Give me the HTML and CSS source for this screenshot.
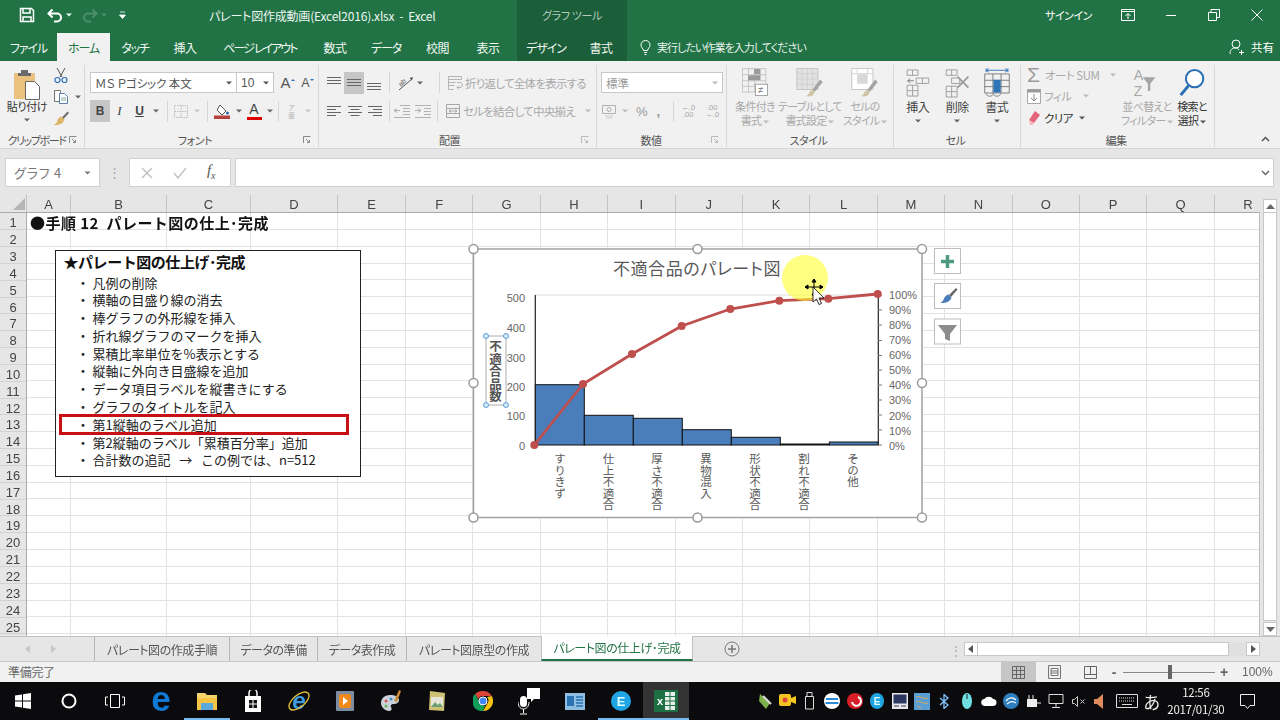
FILE: index.html
```html
<!DOCTYPE html>
<html lang="ja">
<head>
<meta charset="utf-8">
<title>パレート図作成動画(Excel2016).xlsx - Excel</title>
<link rel="stylesheet" href="styles.css">
</head>
<body>
<svg class="defs" width="0" height="0">
  <symbol id="caret" viewBox="0 0 6 4"><path d="M0 .5h6L3 3.5z" fill="currentColor"/></symbol>
  <symbol id="launch" viewBox="0 0 8 8"><path d="M.5 7V.5H7.5M3 3l3.500 3.500M6.500 4v2.500H4" fill="none" stroke="currentColor"/></symbol>
  <symbol id="al-top" viewBox="0 0 16 16"><path d="M1 2.500h14M1 5.500h14M1 8.500h14" stroke="currentColor" fill="none"/></symbol>
  <symbol id="al-mid" viewBox="0 0 16 16"><path d="M1 4.500h14M1 7.500h14M1 10.500h14" stroke="currentColor" fill="none"/></symbol>
  <symbol id="al-bot" viewBox="0 0 16 16"><path d="M1 8.500h14M1 11.500h14M1 14.500h14" stroke="currentColor" fill="none"/></symbol>
  <symbol id="al-l" viewBox="0 0 16 16"><path d="M1 3.500h14M1 6.500h9M1 9.500h14M1 12.500h9" stroke="currentColor" fill="none"/></symbol>
  <symbol id="al-c" viewBox="0 0 16 16"><path d="M1 3.500h14M3.500 6.500h9M1 9.500h14M3.500 12.500h9" stroke="currentColor" fill="none"/></symbol>
  <symbol id="al-r" viewBox="0 0 16 16"><path d="M1 3.500h14M6 6.500h9M1 9.500h14M6 12.500h9" stroke="currentColor" fill="none"/></symbol>
  <symbol id="brush" viewBox="0 0 16 16"><path d="M8.500 7.500L14 1.500l1.500 1.500-5.500 6z" fill="#6e6e6e"/><path d="M8 6.500l3 3-2 3.500c-2 1.500-6 2.500-9 2 3-1 3.500-3 4-5 1-2 3-3.500 4-3.500z" fill="#dcb76a"/></symbol>
</svg>

<header class="titlebar">
  <div class="qat">
    <svg class="qi-save" width="16" height="16" viewBox="0 0 16 16"><path d="M1.500 1.500h11l2 2v11h-13z" fill="none" stroke="#fff" stroke-width="1.500"/><path d="M4 2v4h7V2M4 15v-5h8v5" fill="none" stroke="#fff" stroke-width="1.500"/></svg>
    <svg class="qi-undo" width="16" height="16" viewBox="0 0 16 16"><path d="M2 6.500h8a4 4 0 0 1 0 8H7M5.500 2.500L1.500 6.500l4 4" fill="none" stroke="#fff" stroke-width="2"/></svg>
    <svg class="qi-c" width="6" height="4"><use href="#caret"/></svg>
    <svg class="qi-redo" width="16" height="16" viewBox="0 0 16 16"><path d="M14 6.500H6a4 4 0 0 0 0 8h3M10.500 2.500l4 4-4 4" fill="none" stroke="#4d8f6b" stroke-width="2"/></svg>
    <svg class="qi-c dim" width="6" height="4"><use href="#caret"/></svg>
    <svg class="qi-more" width="7" height="8" viewBox="0 0 7 8"><path d="M1 1h5M.5 4h6L3.500 7.500z" stroke="#fff" fill="#fff" stroke-width=".8"/></svg>
  </div>
  <div class="doc-title">パレート図作成動画(Excel2016).xlsx&nbsp; -&nbsp; Excel</div>
  <div class="tool-title">グラフ ツール</div>
  <div class="signin">サインイン</div>
  <div class="winbtns">
    <svg width="14" height="14" viewBox="0 0 14 14"><path d="M.5 1.500h13v11H.5zM.5 3.500h13M7 11V5.500M4.500 8L7 5.500 9.500 8" fill="none" stroke="#fff"/></svg>
    <svg width="12" height="12" viewBox="0 0 12 12"><path d="M1 6.500h10" stroke="#fff"/></svg>
    <svg width="12" height="12" viewBox="0 0 12 12"><path d="M.5 3.500h8v8h-8zM3 3.500V.5h8.500v8H8.500" fill="none" stroke="#fff"/></svg>
    <svg width="12" height="12" viewBox="0 0 12 12"><path d="M.5.500l11 11M11.500.5l-11 11" stroke="#fff"/></svg>
  </div>
</header>

<nav class="tabsbar">
  <div class="tab kana t-file">ファイル</div>
  <div class="tab kana t-home active">ホーム</div>
  <div class="tab kana t-touch">タッチ</div>
  <div class="tab t-ins">挿入</div>
  <div class="tab t-page">ページ レイアウト</div>
  <div class="tab t-num">数式</div>
  <div class="tab kana t-data">データ</div>
  <div class="tab t-rev">校閲</div>
  <div class="tab t-view">表示</div>
  <div class="tab kana tool t-des">デザイン</div>
  <div class="tab tool t-fmt">書式</div>
  <div class="tell">
    <svg width="11" height="15" viewBox="0 0 11 15"><path d="M3.500 10.500C3 8 1 7.500 1 5a4.500 4.500 0 0 1 9 0c0 2.500-2 3-2.500 5.500zM4 12.500h3M4.500 14.500h2" fill="none" stroke="#fff"/></svg>
    <span>実行したい作業を入力してください</span>
  </div>
  <div class="share">
    <svg width="16" height="16" viewBox="0 0 16 16"><circle cx="7" cy="5" r="4" fill="none" stroke="#fff"/><path d="M1 15c0-4 2-6 5-6 2 0 3 .5 4 2M10 13.500h5M12.500 11v5" fill="none" stroke="#fff"/></svg>
    <span>共有</span>
  </div>
</nav>

<section class="ribbon">
  <div class="group g-clip">
    <div class="gbody clip-body">
      <div class="paste">
        <svg width="28" height="31" viewBox="0 0 28 31"><rect x="1" y="4" width="21" height="26" rx="1" fill="#eac17f"/><path d="M8 1h7v3h3v3H5V4h3z" fill="#6a6a6a"/><path d="M12.500 12.500h9l5 5v13h-14z" fill="#fff" stroke="#666"/></svg>
        <span class="lbl dark">貼り付け</span>
        <svg class="car" width="6" height="4"><use href="#caret"/></svg>
      </div>
      <div class="clip-small">
        <svg width="16" height="16" viewBox="0 0 16 16"><path d="M4 1l5 9M12 1L7 10" stroke="#555" fill="none"/><circle cx="4.500" cy="13" r="2.500" fill="none" stroke="#2b6fb5" stroke-width="1.200"/><circle cx="11.500" cy="13" r="2.500" fill="none" stroke="#2b6fb5" stroke-width="1.200"/></svg>
        <div class="inl"><svg width="16" height="15" viewBox="0 0 16 15"><path d="M1.500 1.500h6v11h-6z" fill="#fff" stroke="#777"/><path d="M6.500 4.500h5l3 3v7h-8z" fill="#fff" stroke="#5a7fa8"/><path d="M8 9h5M8 11h5" stroke="#8aa"/></svg><svg class="car2" width="6" height="4"><use href="#caret"/></svg></div>
        <svg width="17" height="16" viewBox="0 0 16 16"><use href="#brush"/></svg>
      </div>
    </div>
    <div class="glabel"><i></i><span>クリップボード</span><svg width="8" height="8"><use href="#launch"/></svg></div>
  </div>

  <div class="group g-font">
    <div class="gbody font-body">
      <div class="row">
        <div class="combo c-font"><span>ＭＳ Ｐゴシック 本文</span><svg width="6" height="4"><use href="#caret"/></svg></div>
        <div class="combo c-size"><span>10</span><svg width="6" height="4"><use href="#caret"/></svg></div>
        <div class="w20 aa bigA">A<sup class="up"></sup></div>
        <div class="w20 aa smallA">A<sup class="dn"></sup></div>
      </div>
      <div class="row row2">
        <div class="fbtn w20 on b">B</div>
        <div class="fbtn w19 it">I</div>
        <div class="fbtn w21 un">U</div>
        <div class="cw w12"><svg width="6" height="4"><use href="#caret"/></svg></div>
        <div class="vs m5"></div>
        <div class="fbtn w25"><svg width="16" height="15" viewBox="0 0 16 15"><path d="M1.500 1.500h13v12h-13zM8 1.500v12M1.500 7.500h13" fill="none" stroke="#bdbdbd" stroke-dasharray="1.500 1"/></svg></div>
        <div class="cw w8 dim"><svg width="6" height="4"><use href="#caret"/></svg></div>
        <div class="vs m6"></div>
        <div class="fbtn w26 col"><svg width="16" height="15" viewBox="0 0 16 15"><path d="M6 1l6 6-4 4-5-5z" fill="#fff" stroke="#555"/><circle cx="13.500" cy="9" r="1.500" fill="#2b6fb5"/><rect y="11.500" width="16" height="3.500" fill="#b5413f"/></svg></div>
        <div class="cw w7"><svg width="6" height="4"><use href="#caret"/></svg></div>
        <div class="fbtn w24 col"><span class="fa">A</span><b class="redbar"></b></div>
        <div class="cw w7"><svg width="6" height="4"><use href="#caret"/></svg></div>
        <div class="vs m5"></div>
        <div class="fbtn w25 ruby">ア<br>亜</div>
        <div class="cw w8 dim"><svg width="6" height="4"><use href="#caret"/></svg></div>
      </div>
    </div>
    <div class="glabel"><i></i><span>フォント</span><svg width="8" height="8"><use href="#launch"/></svg></div>
  </div>

  <div class="group g-align">
    <div class="gbody align-body">
      <div class="row">
        <svg class="al" width="16" height="16"><use href="#al-top"/></svg>
        <div class="al-on"><svg width="16" height="16"><use href="#al-mid"/></svg></div>
        <svg class="al" width="16" height="16"><use href="#al-bot"/></svg>
        <div class="vs v-a"></div>
        <div class="orient">
          <svg width="18" height="18" viewBox="0 0 18 18"><text x="2" y="10" class="ab" transform="rotate(-45 7 8)">ab</text><path d="M3 16L16 5" stroke="#555" fill="none"/><path d="M17 3l-3.500 1 2.500 2.500z" fill="#555"/></svg>
          <svg width="6" height="4"><use href="#caret"/></svg>
        </div>
        <div class="vs v-b"></div>
        <div class="cmd cmd-wrap dis">
          <svg width="16" height="16" viewBox="0 0 16 16"><path d="M1.500 1.500h13v3h-13zM1.500 7.500h7M1.500 10.500h6M1.500 14.500h5M1.500 1.500v13M10 7.500h3a2 2 0 0 1 0 5h-3l2-2m-2 2l2 2" fill="none" stroke="#b4b4b4"/></svg>
          <span>折り返して全体を表示する</span>
        </div>
      </div>
      <div class="row row2">
        <svg class="al2" width="16" height="16"><use href="#al-l"/></svg>
        <svg class="al2" width="16" height="16"><use href="#al-c"/></svg>
        <svg class="al2 last" width="16" height="16"><use href="#al-r"/></svg>
        <div class="vs v-c"></div>
        <svg class="ind" width="18" height="14" viewBox="0 0 18 14"><path d="M7 1.500h10M10 4.500h7M10 7.500h7M10 10.500h7M1 13.500h16M1 6.500h6M1 6.500l3-2M1 6.500l3 2" fill="none" stroke="#b2b2b2"/></svg>
        <svg class="ind" width="18" height="14" viewBox="0 0 18 14"><path d="M1 1.500h16M1 13.500h16M10 4.500h7M10 7.500h7M10 10.500h7M1 6.500h6M7 6.500l-3-2M7 6.500l-3 2" fill="none" stroke="#b2b2b2"/></svg>
        <div class="vs v-d"></div>
        <div class="cmd cmd-merge dis">
          <svg width="16" height="16" viewBox="0 0 16 16"><path d="M1.500 1.500h13v13h-13zM1.500 5.500h13M1.500 10.500h13M4 8h8M4 8l2-1.500M4 8l2 1.500M12 8l-2-1.500M12 8l-2 1.500" fill="none" stroke="#a8a8a8"/></svg>
          <span>セルを結合して中央揃え</span>
          <svg class="car3" width="6" height="4"><use href="#caret"/></svg>
        </div>
      </div>
    </div>
    <div class="glabel"><i></i><span>配置</span><svg class="dim" width="8" height="8"><use href="#launch"/></svg></div>
  </div>

  <div class="group g-num">
    <div class="gbody num-body">
      <div class="row">
        <div class="combo c-num"><span>標準</span><svg class="dim" width="6" height="4"><use href="#caret"/></svg></div>
      </div>
      <div class="row row2 numrow">
        <svg width="17" height="15" viewBox="0 0 17 15"><path d="M1.500 1.500h13v8h-13z" fill="none" stroke="#b0b0b0"/><circle cx="8" cy="5.500" r="2" fill="none" stroke="#b0b0b0"/><path d="M4 12h8M5 14h6" stroke="#ccc"/></svg>
        <svg class="dim ncar" width="6" height="4"><use href="#caret"/></svg>
        <span class="pct">%</span>
        <span class="comma">,</span>
        <div class="vs m4"></div>
        <span class="dec">←.0<br>.00</span>
        <span class="dec">.00<br>→.0</span>
      </div>
    </div>
    <div class="glabel"><i></i><span>数値</span><svg class="dim" width="8" height="8"><use href="#launch"/></svg></div>
  </div>

  <div class="group g-styles">
    <div class="gbody styles-body">
      <div class="big dis s-c">
        <svg class="st" width="26" height="29" viewBox="0 0 30 33"><path d="M.5.500h27v27H.5zM.5 7.500h27M.5 14.500h27M.5 21h14M7.500.5v27M14.500.5v27M21 .5v14" fill="none" stroke="#c0c0c0"/><path d="M14 1h7v6h-7zM7 8h7v6H7zM14 8h7v6h-7z" fill="#9a9a9a"/><rect x="15.500" y="18.500" width="14" height="13" fill="#fff" stroke="#9a9a9a"/><text x="18.500" y="29" class="ne">≠</text></svg>
        <span>条件付き<br>書式 <svg width="6" height="4"><use href="#caret"/></svg></span>
      </div>
      <div class="big dis s-t">
        <svg class="st" width="28" height="29" viewBox="0 0 31 33"><path d="M.5.500h24v24H.5z" fill="#e2e2e2" stroke="#c0c0c0"/><path d="M.5 6.500h24M.5 12.500h24M.5 18.500h24M6.500.5v24M12.500.5v24M18.500.5v24" stroke="#cfcfcf"/><path d="M27 13L18 25l3 2 9-11z" fill="#a4a4a4"/><path d="M18 25l3 2-2 4c-2 1-5 2-8 1 2-1 3-2 4-5z" fill="#cfc5a5"/></svg>
        <span>テーブルとして<br>書式設定 <svg width="6" height="4"><use href="#caret"/></svg></span>
      </div>
      <div class="big dis s-s">
        <svg class="st" width="28" height="29" viewBox="0 0 31 33"><path d="M.5.500h24v24H.5z" fill="#fff" stroke="#c0c0c0"/><path d="M.5 6.500h24M6.500.5v6M18.500.5v6" stroke="#cfcfcf"/><rect x="6.500" y="7" width="12" height="11" fill="#d8d8d8"/><path d="M27 13L18 25l3 2 9-11z" fill="#a4a4a4"/><path d="M18 25l3 2-2 4c-2 1-5 2-8 1 2-1 3-2 4-5z" fill="#cfc5a5"/></svg>
        <span>セルの<br>スタイル <svg width="6" height="4"><use href="#caret"/></svg></span>
      </div>
    </div>
    <div class="glabel"><i></i><span>スタイル</span><i></i></div>
  </div>

  <div class="group g-cells">
    <div class="gbody cells-body">
      <div class="big cell">
        <svg class="ce" width="27" height="29" viewBox="0 0 30 32"><path d="M3.500 1.500h12v6h-12zM9.500 1.500v6M3.500 18.500h12v12h-12zM3.500 24.500h12M9.500 18.500v12M13.500 10.500h14v6h-14zM20.500 10.500v6" fill="none" stroke="#9b9b9b"/><path d="M4 13.500h7M4 13.500l3-2.500M4 13.500l3 2.500" fill="none" stroke="#777"/></svg>
        <span>挿入</span><svg class="car" width="6" height="4"><use href="#caret"/></svg>
      </div>
      <div class="big cell">
        <svg class="ce" width="29" height="29" viewBox="0 0 32 32"><path d="M3.500 1.500h12v6h-12zM9.500 1.500v6M3.500 19.500h12v12h-12zM3.500 25.500h12M9.500 19.500v12M9.500 10.500h9v6h-9z" fill="none" stroke="#9b9b9b"/><path d="M16 9l12 12M28 9L16 21" stroke="#9c9c9c" stroke-width="2"/></svg>
        <span>削除</span><svg class="car" width="6" height="4"><use href="#caret"/></svg>
      </div>
      <div class="big cell">
        <svg class="ce" width="26" height="31" viewBox="0 0 28 33"><path d="M2 2.500h24M2 .5v4M26 .5v4M2 2.500l3-2M2 2.500l3 2M26 2.500l-3-2M26 2.500l-3 2" fill="none" stroke="#2b6fb5"/><path d="M.5 6.500h27v21H.5zM.5 13.500h27M.5 20.500h27M9.500 6.500v21M18.500 6.500v21" fill="none" stroke="#777"/><rect x="10" y="13" width="8" height="8" fill="#2e75b6"/><rect x="10" y="20" width="8" height="7" fill="#2e75b6"/><path d="M2 28c0 4 8 4 8 0M10 28c0 4 8 4 8 0" fill="none" stroke="#777"/></svg>
        <span>書式</span><svg class="car" width="6" height="4"><use href="#caret"/></svg>
      </div>
    </div>
    <div class="glabel"><i></i><span>セル</span><i></i></div>
  </div>

  <div class="group g-edit">
    <div class="gbody edit-body">
      <div class="edit-list">
        <div class="e-row dis"><span class="sigma">Σ</span><span>オート SUM</span><svg class="car4" width="6" height="4"><use href="#caret"/></svg></div>
        <div class="e-row dis"><svg width="14" height="15" viewBox="0 0 14 15"><path d="M.5.500h13v14H.5z" fill="#fff" stroke="#a8a8a8"/><path d="M.5.500h13v3H.5z" fill="#9a9a9a"/><path d="M7 5v7M4 9l3 3 3-3" fill="none" stroke="#888"/></svg><span>フィル</span><svg class="car4" width="6" height="4"><use href="#caret"/></svg></div>
        <div class="e-row clr"><svg width="14" height="15" viewBox="0 0 14 15"><path d="M8 1l5 4-6 8-5-3z" fill="#e4647c"/><path d="M2 10l5 3-1.500 2H3z" fill="#f3b5c0"/></svg><span>クリア</span><svg class="car4" width="6" height="4"><use href="#caret"/></svg></div>
      </div>
      <div class="big dis s-sort">
        <svg width="30" height="30" viewBox="0 0 36 36"><text x="2" y="14" class="az">A</text><text x="2" y="33" class="az">Z</text><path d="M13 11h15l-6 8v8l-3 1v-9z" fill="#a5a5a5"/></svg>
        <span>並べ替えと<br>フィルター <svg width="6" height="4"><use href="#caret"/></svg></span>
      </div>
      <div class="big s-find">
        <svg width="26" height="30" viewBox="0 0 30 34"><circle cx="18" cy="12" r="10" fill="#fff" stroke="#2b6fb5" stroke-width="2.400"/><path d="M11 20L2 31" stroke="#2b6fb5" stroke-width="3.500"/></svg>
        <span>検索と<br>選択 <svg width="6" height="4"><use href="#caret"/></svg></span>
      </div>
    </div>
    <div class="glabel"><i></i><span>編集</span><i></i></div>
  </div>
  <div class="collapse"><svg width="9" height="6" viewBox="0 0 9 6"><path d="M1 5l3.500-3.500L8 5" fill="none" stroke="#555" stroke-width="1.500"/></svg></div>
</section>

<section class="formula">
  <div class="namebox"><span>グラフ 4</span><svg width="7" height="4"><use href="#caret"/></svg></div>
  <div class="fdots">⋮</div>
  <div class="fxbox">
    <svg width="12" height="12" viewBox="0 0 12 12"><path d="M1 1l10 10M11 1L1 11" stroke="#c3c3c3" stroke-width="1.500"/></svg>
    <svg width="14" height="12" viewBox="0 0 14 12"><path d="M1 6l4 5 8-10" fill="none" stroke="#c3c3c3" stroke-width="1.500"/></svg>
    <span class="fx">f<sub>x</sub></span>
  </div>
  <div class="fbox"><svg width="9" height="6" viewBox="0 0 9 6"><path d="M1 1l3.500 3.500L8 1" fill="none" stroke="#666" stroke-width="1.500"/></svg></div>
</section>

<main class="sheet">
  <div class="sheet-left">
    <div class="colhead">
      <div class="corner"><svg width="12" height="12" viewBox="0 0 12 12"><path d="M12 0v12H0z" fill="#b5b5b5"/></svg></div>
      <div class="cols">
        <div>A</div><div>B</div><div>C</div><div>D</div><div>E</div><div>F</div><div>G</div><div>H</div><div>I</div>
        <div>J</div><div>K</div><div>L</div><div>M</div><div>N</div><div>O</div><div>P</div><div>Q</div><div>R</div>
      </div>
    </div>
    <div class="gridwrap">
      <div class="rownums">
        <div>1</div><div>2</div><div>3</div><div>4</div><div>5</div><div>6</div><div>7</div><div>8</div><div>9</div><div>10</div>
        <div>11</div><div>12</div><div>13</div><div>14</div><div>15</div><div>16</div><div>17</div><div>18</div><div>19</div><div>20</div>
        <div>21</div><div>22</div><div>23</div><div>24</div><div>25</div>
      </div>
      <div class="cells">
        <i></i><i></i><i></i><i></i><i></i><i></i><i></i><i></i><i></i><i></i><i></i><i></i><i></i><i></i><i></i><i></i><i></i><i></i>
      </div>
    </div>
  </div>
  <div class="vscroll">
    <div class="vbtn"><svg width="9" height="5"><path d="M0 5h9L4.500 0z" fill="#666"/></svg></div>
    <div class="vthumb"></div>
    <div class="vbtn"><svg width="9" height="5"><path d="M0 0h9L4.500 5z" fill="#666"/></svg></div>
  </div>

  <h1 class="a1">●手順 12&nbsp; パレート図の仕上･完成</h1>

  <div class="textbox">
    <h2>★パレート図の仕上げ･完成</h2>
    <ul>
      <li>凡例の削除</li>
      <li>横軸の目盛り線の消去</li>
      <li>棒グラフの外形線を挿入</li>
      <li>折れ線グラフのマークを挿入</li>
      <li>累積比率単位を%表示とする</li>
      <li>縦軸に外向き目盛線を追加</li>
      <li>データ項目ラベルを縦書きにする</li>
      <li>グラフのタイトルを記入</li>
      <li class="mark">第1縦軸のラベル追加</li>
      <li>第2縦軸のラベル「累積百分率」追加</li>
      <li>合計数の追記&nbsp;&nbsp; →&nbsp;&nbsp; この例では、n=512</li>
    </ul>
  </div>

  <svg class="chart" width="530" height="300" viewBox="460 235 530 300">
    <rect x="473.500" y="249" width="448.500" height="268.500" fill="#fff" stroke="#a3a3a3" stroke-width="1.500"/>
    <text x="697" y="275" class="c-title">不適合品のパレート図</text>
    <path d="M535 295h343" stroke="#dcdcdc"/>
    <g class="bars">
      <rect x="535.300" y="384.700" width="49" height="60.300"/>
      <rect x="584.300" y="415.300" width="49" height="29.700"/>
      <rect x="633.300" y="418.300" width="49" height="26.700"/>
      <rect x="682.300" y="429.700" width="49" height="15.300"/>
      <rect x="731.300" y="437.300" width="49" height="7.700"/>
      <rect x="780.300" y="444" width="49" height="1"/>
      <rect x="829.300" y="442" width="49" height="3"/>
    </g>
    <path d="M535.300 295v150M878.300 295v150" stroke="#222" stroke-width="1.200"/>
    <path d="M878 295h4M878 310h4M878 325h4M878 340.500h4M878 355.500h4M878 370h4M878 385h4M878 400h4M878 415h4M878 430h4M878 445h4" stroke="#777"/>
    <g class="ax-l">
      <text x="525" y="302">500</text><text x="525" y="332">400</text><text x="525" y="361.500">300</text>
      <text x="525" y="390.500">200</text><text x="525" y="420">100</text><text x="525" y="449.500">0</text>
    </g>
    <g class="ax-r">
      <text x="889" y="298.500">100%</text><text x="889" y="313.500">90%</text><text x="889" y="328.500">80%</text>
      <text x="889" y="344">70%</text><text x="889" y="359">60%</text><text x="889" y="374">50%</text>
      <text x="889" y="389">40%</text><text x="889" y="404">30%</text><text x="889" y="419.500">20%</text>
      <text x="889" y="434.500">10%</text><text x="889" y="449.500">0%</text>
    </g>
    <g class="cats">
      <text x="560" y="453">すりきず</text><text x="608.500" y="453">仕上不適合</text><text x="657" y="453">厚さ不適合</text>
      <text x="706" y="453">異物混入</text><text x="755" y="453">形状不適合</text><text x="804" y="453">割れ不適合</text><text x="853" y="453">その他</text>
    </g>
    <path d="M534.300 445L583 384L632 354L681.700 326L730.300 309L779.300 300.700L828.300 298.700L877.700 294" fill="none" stroke="#be4f4c" stroke-width="2.800"/>
    <g fill="#be4f4c">
      <circle cx="534.300" cy="445" r="4"/><circle cx="583" cy="384" r="4"/><circle cx="632" cy="354" r="4"/><circle cx="681.700" cy="326" r="4"/>
      <circle cx="730.300" cy="309" r="4"/><circle cx="779.300" cy="300.700" r="4"/><circle cx="828.300" cy="298.700" r="4"/><circle cx="877.700" cy="294" r="4"/>
    </g>
    <rect x="486" y="336" width="20" height="69" fill="#fff" stroke="#9a9a9a" stroke-width=".8"/>
    <text x="495.500" y="340" class="ax-title">不適合品数</text>
    <g class="h-small">
      <circle cx="486" cy="336" r="2.500"/><circle cx="506" cy="336" r="2.500"/><circle cx="486" cy="405" r="2.500"/><circle cx="506" cy="405" r="2.500"/>
    </g>
    <g class="h-big">
      <circle cx="473.500" cy="249" r="4.500"/><circle cx="697.500" cy="249" r="4.500"/><circle cx="922" cy="249" r="4.500"/>
      <circle cx="473.500" cy="383" r="4.500"/><circle cx="922" cy="383" r="4.500"/>
      <circle cx="473.500" cy="517.500" r="4.500"/><circle cx="697.500" cy="517.500" r="4.500"/><circle cx="922" cy="517.500" r="4.500"/>
    </g>
    <circle cx="805" cy="278" r="23" fill="#ffff33" opacity=".62"/>
    <path d="M814 279v18M805 287h18M814 279l-2 3h4zM814 297l-2-3h4zM805 287l3-2v4zM823 287l-3-2v4z" fill="#000" stroke="#000" stroke-width="1"/>
    <path d="M813 287v15l3.500-3 2.500 5.500 2.500-1-2.500-5.500h5z" fill="#fff" stroke="#000" stroke-width=".8"/>
    <g class="fb">
      <rect x="934.500" y="248.500" width="26" height="25"/><rect x="934.500" y="283.500" width="26" height="25"/><rect x="934.500" y="319" width="26" height="25"/>
    </g>
    <path d="M947.500 255v13M941 261.500h13" stroke="#4f9a80" stroke-width="3.500"/>
    <path d="M949 295l7-7 1.500 1.500-6.500 7.500z" fill="#666"/><path d="M948.500 294.500l3 3c-1 4-6 6-11.500 5.500 3.500-1.500 3-3 4.500-5.500 1-1.500 2.500-3 4-3z" fill="#4a7ebb"/>
    <path d="M938 325h19l-7 9v7l-5-2v-5z" fill="#8c8c8c"/>
  </svg>
</main>

<section class="sheettabs">
  <div class="nav-arrows"><svg width="5" height="8"><path d="M5 0v8L0 4z" fill="#c8c8c8"/></svg><svg width="5" height="8"><path d="M0 0v8l5-4z" fill="#c8c8c8"/></svg></div>
  <div class="stab s1">パレート図の作成手順</div>
  <div class="stab s2">データの準備</div>
  <div class="stab s3">データ表作成</div>
  <div class="stab s4">パレート図原型の作成</div>
  <div class="stab s5">パレート図の仕上げ･完成</div>
  <div class="addsheet"><svg width="16" height="16" viewBox="0 0 16 16"><circle cx="8" cy="8" r="7" fill="none" stroke="#777"/><path d="M8 4v8M4 8h8" stroke="#777" stroke-width="1.500"/></svg></div>
  <div class="splitdots">⋮</div>
  <div class="hscroll">
    <div class="hbtn"><svg width="5" height="8"><path d="M5 0v8L0 4z" fill="#555"/></svg></div>
    <div class="hthumb"></div>
    <div class="htrack"></div>
    <div class="hbtn"><svg width="5" height="8"><path d="M0 0v8l5-4z" fill="#555"/></svg></div>
  </div>
</section>

<footer class="status">
  <span class="ready">準備完了</span>
  <div class="views">
    <div class="view on"><svg width="13" height="13" viewBox="0 0 13 13"><path d="M.5.500h12v12H.5zM.5 4.500h12M.5 8.500h12M4.500.5v12M8.500.5v12" fill="none" stroke="#666"/></svg></div>
    <div class="view"><svg width="13" height="14" viewBox="0 0 13 14"><path d="M.5.500h12v13H.5zM3 3.500h7v7H3zM3 6h7M3 8h7" fill="none" stroke="#777"/></svg></div>
    <div class="view"><svg width="13" height="13" viewBox="0 0 13 13"><path d="M.5.500h12v12H.5zM.5 8.500h12M6.500.5v8" fill="none" stroke="#666"/></svg></div>
  </div>
  <div class="zoombar">
    <span class="zbtn">-</span>
    <div class="slider"><b></b></div>
    <span class="zbtn">+</span>
  </div>
  <span class="pctzoom">100%</span>
</footer>

<footer class="taskbar">
  <div class="tb">
    <svg width="16" height="16" viewBox="0 0 16 16"><path d="M0 2.500l7-1v6H0zM8 1.300L16 0v7.500H8zM0 8.500h7v6l-7-1zM8 8.500h8V16l-8-1.300z" fill="#fff"/></svg>
  </div>
  <div class="tb"><svg width="16" height="16" viewBox="0 0 16 16"><circle cx="8" cy="8" r="6.500" fill="none" stroke="#fff" stroke-width="2"/></svg></div>
  <div class="tb"><svg width="20" height="16" viewBox="0 0 20 16"><path d="M5.500 1.500h9v13h-9zM3 4H.5v8H3M17 4h2.500v8H17" fill="none" stroke="#fff"/></svg></div>
  <div class="tb"><span class="edge">e</span></div>
  <div class="tb run"><svg width="20" height="18" viewBox="0 0 20 18"><path d="M0 1h8l2 2h10v4H0z" fill="#f5d26a"/><rect y="6" width="20" height="12" fill="#f5c445"/><rect x="4" y="11" width="12" height="7" fill="#5aa9dd"/></svg></div>
  <div class="tb"><svg width="18" height="22" viewBox="0 0 18 22"><path d="M1 6h16v16H1z" fill="#fff"/><path d="M5 6V3a4 4 0 0 1 8 0v3" fill="none" stroke="#fff" stroke-width="1.500"/><path d="M5 10h3.500v3.500H5zM9.500 10H13v3.500H9.500zM5 14.500h3.500V18H5zM9.500 14.500H13V18H9.500z" fill="#111"/></svg></div>
  <div class="tb"><div class="ie-wrap"><span class="ie">e</span><svg width="24" height="24" viewBox="0 0 24 24"><ellipse cx="12" cy="12" rx="12" ry="6" transform="rotate(-40 12 12)" fill="none" stroke="#e8c33c" stroke-width="1.300"/></svg></div></div>
  <div class="tb"><svg width="18" height="20" viewBox="0 0 18 20"><rect width="18" height="20" rx="1" fill="#7d8ba3"/><rect x="3" y="3" width="12" height="14" rx="2" fill="#f08a1d"/><path d="M7 6l5 4-5 4z" fill="#fff"/></svg></div>
  <div class="tb"><svg width="22" height="24" viewBox="0 0 22 24"><path d="M10 6C4 6 1 10 1 14s4 8 8 8c3 0 3-2 2-4s1-3 3-3 5-1 5-4-4-5-9-5z" fill="#c9d2da"/><circle cx="6" cy="12" r="1.500" fill="#d9534f"/><circle cx="6" cy="17" r="1.500" fill="#5cb85c"/><circle cx="11" cy="10" r="1.500" fill="#428bca"/><path d="M14 12L19 1l2 1-4 11z" fill="#c98b3c"/></svg></div>
  <div class="tb"><svg width="20" height="22" viewBox="0 0 20 22"><path d="M3 1l15 2-1 18-15-1z" fill="#cfc275"/><rect x="4" y="7" width="12" height="10" fill="#e6e6d8"/><path d="M4 17l4-5 3 3 2-2 3 4z" fill="#6b9f71"/></svg></div>
  <div class="tb"><svg width="20" height="20" viewBox="0 0 20 20"><path d="M10 0a10 10 0 0 1 8.700 5H10a5 5 0 0 0-4.700 3.300L2 3a10 10 0 0 1 8-3z" fill="#db4437"/><path d="M18.700 5A10 10 0 0 1 10 20l4.300-7.500A5 5 0 0 0 14 6z" fill="#f4c20d"/><path d="M2 3l4.300 7.500A5 5 0 0 0 12 14.500L10 20A10 10 0 0 1 2 3z" fill="#0f9d58"/><circle cx="10" cy="10" r="4" fill="#4285f4" stroke="#fff"/></svg></div>
  <div class="tb"><svg width="22" height="28" viewBox="0 0 22 28"><path d="M9 1h13v11h-6l-3 3v-3H9z" fill="#fff"/><rect x="2" y="9" width="7" height="11" rx="3.500" fill="#fff"/><path d="M0 15c0 5 3 7 5.500 7S11 20 11 15M5.500 22v4M2 27h7" fill="none" stroke="#fff"/></svg></div>
  <div class="tb"><svg width="20" height="17" viewBox="0 0 20 17"><rect width="20" height="17" fill="#8fbfe0"/><rect x="2" y="3" width="7" height="10" fill="#2b72b3"/><path d="M11 4h7M11 7h7M11 10h7M11 13h7" stroke="#2b72b3" stroke-width="1.500"/></svg></div>
  <div class="tb run"><span class="blueE">E</span></div>
  <div class="tb active run"><div class="xl"><span>x</span><svg width="10" height="18" viewBox="0 0 10 18"><rect width="10" height="18" fill="#e6efe9"/><path d="M0 4.500h10M0 9h10M0 13.500h10M5 0v18" stroke="#1e6f42"/></svg></div></div>
  <div class="tray">
    <div><svg width="16" height="18" viewBox="0 0 16 18"><path d="M3 2l10 9-4 6-7-8z" fill="#7eb04a"/><path d="M6 4l8 8" stroke="#ddd" stroke-width="2"/></svg></div>
    <div><svg width="17" height="14" viewBox="0 0 17 14"><rect width="12" height="12" rx="2" fill="#f5c521"/><circle cx="6" cy="6" r="2.500" fill="#d9433f"/><path d="M12 4l5-2v8l-5-2z" fill="#f5c521"/></svg></div>
    <div><svg width="12" height="18" viewBox="0 0 12 18"><path d="M3 .5h5v4H3zM1.500 4.500h8V17h-8z" fill="none" stroke="#ddd"/></svg></div>
    <div><svg width="16" height="16" viewBox="0 0 16 16"><circle cx="8" cy="8" r="8" fill="#fff"/><path d="M2 6h12M1.500 10h13" stroke="#2a8cd8" stroke-width="2"/></svg></div>
    <div><svg width="16" height="16" viewBox="0 0 16 16"><circle cx="8" cy="8" r="8" fill="#d81e27"/><path d="M11 4a4.500 4.500 0 1 1-6 5" fill="none" stroke="#fff" stroke-width="2"/></svg></div>
    <div><span class="mini-e">E</span></div>
    <div><svg width="16" height="16" viewBox="0 0 16 16"><rect width="16" height="16" fill="#e8e8e8"/><rect x="1.500" y="1.500" width="13" height="9" fill="#2a3560"/><path d="M2 13h5M9 13h5" stroke="#2a3560"/></svg></div>
    <div><svg width="16" height="17" viewBox="0 0 16 17"><rect width="16" height="17" fill="#5a9fd4"/><path d="M2 4c4-2 8 3 12 1M2 9c4-2 8 3 12 1M3 13l4 2" stroke="#d6a85a" fill="none"/></svg></div>
    <div><svg width="10" height="15" viewBox="0 0 10 15"><path d="M1 4l8 7-4 3.500V.5l4 3.500-8 7" fill="none" stroke="#7fc3ff" stroke-width="1.300"/></svg></div>
    <div><svg width="10" height="16" viewBox="0 0 10 16"><ellipse cx="5" cy="8" rx="5" ry="8" fill="#6fe0e0"/><path d="M5 1v5" stroke="#222"/></svg></div>
    <div><svg width="16" height="10" viewBox="0 0 16 10"><path d="M4 10a3.500 3.500 0 0 1-.5-7A5 5 0 0 1 12 3a3.500 3.500 0 0 1 0 7z" fill="#fff"/></svg></div>
    <div><svg width="16" height="16" viewBox="0 0 16 16"><circle cx="8" cy="8" r="8" fill="#2f7fc0"/><path d="M3 8c3-4 7-4 10-1M4 11c3-3 6-3 9-1" fill="none" stroke="#fff" stroke-width="1.300"/></svg></div>
    <div><svg width="14" height="13" viewBox="0 0 14 13"><rect y="4" width="10" height="8" fill="#eee"/><path d="M2 4V0M6 4V0M10 8h4" stroke="#eee"/></svg></div>
    <div><svg width="16" height="14" viewBox="0 0 16 14"><path d="M1 .5h14v9H1zM8 9.500v4M4 13.500h8" fill="none" stroke="#ddd"/></svg></div>
    <div><svg width="14" height="13" viewBox="0 0 14 13"><path d="M.5 4.500h2l3-3v10l-3-3h-2zM8.500 4.500l4 4M12.500 4.500l-4 4" fill="none" stroke="#ccc"/></svg></div>
    <div class="spk"><svg width="10" height="15" viewBox="0 0 10 15"><path d="M0 5h3l6-5v15l-6-5H0z" fill="#dd8a5c"/></svg></div>
    <div class="kbd"><svg width="22" height="14" viewBox="0 0 22 14"><path d="M.5.500h21v13H.5z" fill="none" stroke="#ddd"/><path d="M3 4h16M3 7h16" stroke="#ddd" stroke-dasharray="1 1"/><path d="M6 10.500h10" stroke="#ddd"/></svg></div>
    <div class="ime">あ</div>
    <div class="clock">12:56<br>2017/01/30</div>
    <div class="notify"><svg width="15" height="15" viewBox="0 0 15 15"><path d="M.5.500h14v11H10l-2.500 3-2.500-3H.5z" fill="none" stroke="#eee"/></svg></div>
  </div>
</footer>
</body>
</html>
```
FILE: styles.css
```css
*,*::before,*::after{box-sizing:border-box}
html,body{margin:0;padding:0}
body{width:1280px;height:720px;overflow:hidden;background:#f1f1f1;color:#444;
  font-family:"Noto Sans CJK JP","Liberation Sans",sans-serif;font-size:11px;
  font-feature-settings:"palt";display:flex;flex-direction:column;filter:blur(.35px)}
.defs{position:absolute}
svg{display:block;flex:none}
.dim{color:#bbb}

/* title bar */
.titlebar{height:30px;background:#217346;color:#fff;display:flex;align-items:center}
.qat{width:209px;display:flex;align-items:center;padding-left:19px}
.qi-undo{margin-left:12px}
.qi-c{margin-left:3px;color:#dfe}
.qi-c.dim{color:#4d8f6b}
.qi-redo{margin-left:10px}
.qi-more{margin-left:12px}
.doc-title{width:308px;font-size:12px;letter-spacing:-.2px;color:#eef6f1;white-space:nowrap}
.tool-title{width:110px;align-self:stretch;background:#1b5e3a;display:flex;align-items:center;justify-content:center;color:#b5cdbf;font-size:11px;letter-spacing:-.3px}
.signin{margin-left:418px;width:76px;font-size:11px;letter-spacing:-.5px;color:#fff;white-space:nowrap}
.winbtns{display:flex;align-items:center}
.winbtns svg:nth-child(2){margin-left:30px}
.winbtns svg:nth-child(3){margin-left:31px}
.winbtns svg:nth-child(4){margin-left:31px}

/* tabs */
.tabsbar{height:31px;background:#217346;display:flex;color:#fff;font-size:12px}
.tab{display:flex;align-items:center;justify-content:center;padding-top:3px;white-space:nowrap;letter-spacing:-.5px;color:#f2f8f4}
.kana{letter-spacing:-1.1px}
.t-file{width:57px}.t-home{width:53px}.t-touch{width:50px}.t-ins{width:50px}.t-num{width:50px}
.t-page{width:100px;letter-spacing:-1.900px}
.t-data{width:52px}.t-rev{width:51px}.t-view{width:54px;padding-right:4px}.t-des{width:58px}.t-fmt{width:52px}
.tab.tool{background:#1b5e3a}
.tab.active{background:#f1f1f1;color:#217346;margin-top:3px;padding-top:0}
.tell{display:flex;align-items:center;gap:6px;margin-left:13px;padding-top:3px;font-size:11px;letter-spacing:-.95px;width:589px;color:#e8f2ec;white-space:nowrap}
.share{display:flex;align-items:center;gap:6px;padding-top:2px;font-size:11.500px}

/* ribbon */
.ribbon{height:88px;background:#f1f1f1;border-bottom:1px solid #d6d6d6;display:flex;color:#444}
.group{height:82px;margin-top:4px;border-right:1px solid #d8d8d8;display:flex;flex-direction:column;flex:none}
.g-clip{width:85px}.g-font{width:234px}.g-align{width:278px}.g-num{width:130px}.g-styles{width:167px}.g-cells{width:127px}.g-edit{width:194px}
.gbody{height:68px;flex:none}
.glabel{height:14px;display:grid;grid-template-columns:12px 1fr 12px;align-items:center;text-align:center;font-size:11px;line-height:14px;letter-spacing:-.4px;color:#555;padding-right:3px}
.glabel svg{color:#888}
.glabel svg.dim{color:#bbb}
.glabel i{display:block}
.g-clip .glabel{grid-template-columns:4px 1fr 12px;letter-spacing:-1.400px;white-space:nowrap}
.g-font .glabel span{padding-right:10px}
.g-align .glabel span{padding-right:13px}
.g-num .glabel span{padding-right:18px}
.lbl{font-size:11px;letter-spacing:-.4px;white-space:nowrap}
.dark{color:#333}

.clip-body{display:flex}
.paste{width:42px;margin-left:6px;display:flex;flex-direction:column;align-items:center;padding-top:4px;color:#555}
.paste .lbl{line-height:13px}
.car{margin-top:5px;color:#666}
.clip-small{margin-left:5px;padding-top:2px;display:flex;flex-direction:column;gap:6px;width:30px;color:#666}
.inl{display:flex;align-items:center;gap:6px}

.font-body{padding:7px 0 0 5px}
.row{display:flex;align-items:center;height:21px}
.row2{margin-top:7px;height:22px}
.combo{height:21px;background:#fff;border:1px solid #c8c8c8;display:flex;align-items:center;justify-content:space-between;color:#555;padding:0 4px}
.c-font{width:147px;font-size:11.500px;letter-spacing:-.1px}
.c-size{width:37px;border-left:0;font-size:12px;font-family:"Liberation Sans",sans-serif}
.c-num{width:122px;margin-left:4px;color:#999;font-size:11.500px}
.aa{display:flex;align-items:center;justify-content:center;font-family:"Liberation Sans",sans-serif;color:#555}
.bigA{font-size:15px;margin-left:1px}
.smallA{font-size:12.500px}
.aa sup{display:block;width:0;height:0;border:2.500px solid transparent;margin:-6px -5px 0 0}
.aa .up{border-bottom-color:#2b6fb5;border-top:0}
.aa .dn{border-top-color:#2b6fb5;border-bottom:0}
.w7{width:7px}.w8{width:8px}.w12{width:12px}.w19{width:19px}.w20{width:20px}.w21{width:21px}.w24{width:24px}.w25{width:25px}.w26{width:26px}
.fbtn{height:22px;display:flex;align-items:center;justify-content:center;font-family:"Liberation Serif",serif;font-size:13px;color:#444}
.fbtn.on{background:#c6c6c6}
.b{font-family:"Liberation Sans",sans-serif;font-weight:700;font-size:12px}
.it{font-style:italic}
.un{text-decoration:underline;font-family:"Liberation Sans",sans-serif;font-weight:700;font-size:12px}
.col{flex-direction:column}
.fa{font-family:"Liberation Sans",sans-serif;font-size:14px;line-height:14px;color:#444}
.redbar{display:block;width:15px;height:3.500px;background:#e00000;margin-top:1px}
.ruby{font-family:"Noto Sans CJK JP",sans-serif;font-size:7px;line-height:8px;color:#b3b3b3;text-align:center;display:block;padding-top:3px}
.cw{height:22px;display:flex;align-items:center;justify-content:center;color:#666}
.cw.dim{color:#c8c8c8}
.vs{width:1px;height:21px;background:#d6d6d6;flex:none}
.m4{margin:0 2px 0 4px}.m5{margin:0 0 0 5px}.m6{margin:0 1px 0 6px}
.v-a{margin-left:7px}
.v-b{margin:0 7px 0 18px}
.v-c{margin-left:6px}
.v-d{margin:0 7px 0 5px}

.align-body{padding:7px 0 0 7px}
.al,.al2{color:#666}
.al2{margin-right:4.500px}
.al2.last{margin-right:0}
.al-on{width:20px;height:22px;background:#c6c6c6;display:flex;align-items:center;justify-content:center;margin:0 2px;color:#666}
.orient{display:flex;align-items:center;gap:3px;width:31px;padding-left:6px;color:#666}
.orient svg{overflow:visible}
.ab{font-size:7px;fill:#555;font-family:"Liberation Sans",sans-serif}
.cmd{display:flex;align-items:center;gap:2px;font-size:11.500px;letter-spacing:-.75px;white-space:nowrap}
.dis,.dis span{color:#a9a9a9}
.dis svg{color:#bbb}
.car3{margin-left:8px}
.ind{margin:0 0 0 3px}
.ind:first-of-type{margin-left:6px}

.num-body{padding-top:7px}
.numrow{padding-left:4px;color:#aaa;margin-top:7px}
.ncar{margin-left:4px}
.pct{margin-left:8px;font-family:"Liberation Sans",sans-serif;font-size:13px;color:#999}
.comma{margin-left:9px;margin-right:9px;font-family:"Liberation Sans",sans-serif;font-size:13px;font-weight:700;color:#999}
.dec{font-family:"Liberation Sans",sans-serif;font-size:7.500px;line-height:7.500px;color:#a5a5a5;width:24px;text-align:center;white-space:nowrap}

.big{display:flex;flex-direction:column;align-items:center;font-size:11px;line-height:13.500px;letter-spacing:-.7px;text-align:center;white-space:nowrap}
.big span svg{display:inline-block;vertical-align:middle;color:#bbb}
.styles-body{display:flex;padding:3px 0 0 6px}
.s-c{width:44px}.s-t{width:66px}.s-s{width:44px}
.st{margin-bottom:3px}
.cells-body{display:flex;padding:3px 0 0 4px}
.cell{width:39.500px;color:#444;font-size:12px;letter-spacing:-.4px}
.ce{height:30px;margin-bottom:1px}
.cell .car{margin-top:5px;color:#666}
.cell span{line-height:15px}
.edit-body{display:flex;padding:0 0 0 6px}
.edit-list{width:93px;display:flex;flex-direction:column;margin-top:-1px}
.e-row{display:flex;align-items:center;gap:3px;height:21.500px;font-size:11.500px;letter-spacing:-.5px;white-space:nowrap}
.sigma{font-family:"Liberation Sans",sans-serif;font-size:21px;color:#9a9a9a!important;width:15px;line-height:20px}
.car4{margin-left:8px;color:#bbb}
.clr{color:#333}
.clr .car4{color:#555;margin-left:3px}
.s-sort{width:54px;padding-top:3px}
.s-sort svg:first-child,.s-find svg:first-child{margin-bottom:2px}
.az{font-family:"Liberation Sans",sans-serif;font-size:17px;fill:#aaa}
.ne{font-family:"Liberation Sans",sans-serif;font-size:11px;fill:#777}
.s-find{width:36px;color:#333;padding-top:3px}
.s-find span svg{color:#555}
.collapse{flex:1;align-self:flex-end;display:flex;justify-content:flex-end;padding:0 10px 6px 0}

/* formula bar */
.formula{height:46px;background:#e6e6e6;display:flex;align-items:flex-start;padding:9px 6px 0 5px;flex:none}
.namebox{width:95px;height:29px;background:#fff;border:1px solid #d0d0d0;display:flex;align-items:center;justify-content:space-between;padding:0 8px;font-size:13px;color:#777;letter-spacing:.8px}
.fdots{width:29px;text-align:center;line-height:28px;color:#aaa;font-size:13px}
.fxbox{width:102px;height:29px;background:#fff;border:1px solid #d0d0d0;display:flex;align-items:center;padding-left:11px;gap:20px}
.fx{font-family:"Liberation Serif",serif;font-style:italic;font-size:15px;line-height:15px;color:#555}
.fx sub{font-size:10px}
.fbox{width:1040px;height:29px;margin-left:4px;background:#fff;border:1px solid #d0d0d0;display:flex;align-items:center;justify-content:flex-end;padding-right:3px}

/* sheet */
.sheet{height:441px;flex:none;position:relative;display:flex;background:#e6e6e6}
.sheet-left{width:1260px;flex:none;overflow:hidden}
.colhead{height:18.300px;display:flex;background:#e6e6e6;border-bottom:1px solid #ababab;overflow:hidden}
.corner{width:27px;flex:none;display:flex;align-items:flex-end;justify-content:flex-end;padding:0 1px 2px 0;border-right:1px solid #c4c4c4}
.cols{display:grid;grid-template-columns:44px 96px 84px 87px 68px repeat(13,67.400px);flex:none}
.cells{display:grid;grid-template-columns:44px 96px 84px 87px 68px repeat(12,67.400px) 44.700px;width:1232.500px}
.cols div{font:13px/18px "Liberation Sans",sans-serif;color:#444;text-align:center;border-right:1px solid #c4c4c4;padding-top:1px}
.gridwrap{display:flex;height:422.700px;background:#e6e6e6}
.rownums{width:27px;border-right:1px solid #ababab;flex:none}
.rownums div{height:16.850px;font:13px/16.850px "Liberation Sans",sans-serif;color:#444;text-align:center;padding-top:2px;border-bottom:1px solid #d2d2d2}
.cells{background:#fff repeating-linear-gradient(to bottom,transparent 0,transparent 15.850px,#e2e2e2 15.850px,#e2e2e2 16.850px);border-right:1px solid #bcbcbc;flex:none}
.cells i{display:block;border-right:1px solid #e2e2e2}
.cells i:last-child{border-right:0}
.vscroll{width:20px;padding:4px 3px 0 3px;display:flex;flex-direction:column}
.vbtn{height:14px;background:#fff;border:1px solid #c8c8c8;display:flex;align-items:center;justify-content:center}
.vthumb{height:408px;background:#fff;border:1px solid #c8c8c8;border-top:0;margin-bottom:1px}

.a1{position:absolute;left:30px;top:17.500px;margin:0;font-size:15px;line-height:20px;font-weight:700;letter-spacing:.45px;color:#111;white-space:nowrap;font-feature-settings:normal}
.textbox{position:absolute;left:54.500px;top:54.500px;width:306px;height:227.500px;background:#fff;border:1px solid #222;padding:1px 0 0 8px;color:#111;font-feature-settings:normal}
.textbox h2{margin:0 0 2px;font-size:15px;line-height:20px;font-weight:700;letter-spacing:-.45px;white-space:nowrap}
.textbox ul{margin:0;padding:0;list-style:none}
.textbox li{height:17.800px;line-height:17.800px;font-size:13px;padding-left:29px;position:relative;white-space:nowrap;color:#222}
.textbox li::before{content:"・";position:absolute;left:13px}
.mark::after{content:"";position:absolute;left:-4.800px;top:-2px;width:290px;height:21px;border:3px solid #c80f14}

.chart{position:absolute;left:460px;top:40px}
.c-title{font-size:17px;text-anchor:middle;fill:#595959;letter-spacing:.6px}
.bars rect{fill:#4a7ebb;stroke:#111;stroke-width:1}
.ax-l text{font:11px "Liberation Sans",sans-serif;fill:#666;text-anchor:end}
.ax-r text{font:11px "Liberation Sans",sans-serif;fill:#666}
.cats text{font-size:11.500px;fill:#595959;writing-mode:vertical-rl;font-feature-settings:normal}
.ax-title{font-size:12.500px;font-weight:700;fill:#555;writing-mode:vertical-rl;font-feature-settings:normal}
.h-small circle{fill:#d6eaf8;stroke:#5b9bd5;stroke-width:1}
.h-big circle{fill:#fff;stroke:#9a9a9a;stroke-width:1.500}
.fb rect{fill:#fff;stroke:#bdbdbd}

/* sheet tabs */
.sheettabs{height:26px;flex:none;background:#e6e6e6;border-top:1px solid #c2c2c2;border-bottom:1px solid #c8c8c8;display:flex;align-items:center;font-size:12px;letter-spacing:-.45px;color:#555}
.nav-arrows{width:94px;display:flex;gap:21px;padding-left:25px}
.stab{height:24px;display:flex;align-items:center;justify-content:center;border-left:1px solid #b8b8b8;white-space:nowrap}
.s1{width:135px}.s2{width:88px}.s3{width:89px}.s4{width:135px}
.s5{width:152px;height:25px;background:#fff;color:#217346;border-left:1px solid #c2c2c2;border-right:1px solid #c2c2c2;border-bottom:2px solid #217346;margin-top:-1px}
.addsheet{margin-left:31px;width:16px}
.splitdots{margin-left:208px;color:#aaa;width:16px;text-align:center;letter-spacing:0}
.hscroll{height:14px;width:296px;display:flex;align-items:stretch}
.hbtn{width:14px;background:#fff;border:1px solid #c8c8c8;display:flex;align-items:center;justify-content:center}
.hthumb{width:252px;background:#fff;border:1px solid #c8c8c8;border-left:0}
.htrack{width:17px;background:#e0e0e0}

/* status */
.status{height:20px;flex:none;background:#f1f1f1;display:flex;align-items:stretch;font-size:12px;color:#666}
.ready{width:1001px;padding-left:8px;line-height:20px;letter-spacing:-.3px}
.views{display:flex}
.view{width:36px;display:flex;align-items:center;justify-content:center}
.view.on{background:#c6c6c6;width:35px}
.zoombar{display:flex;align-items:center;margin-left:-1px;width:124px}
.zbtn{width:14px;font:700 14px "Liberation Sans",sans-serif;text-align:center;color:#666}
.slider{width:92px;height:1px;background:#888;position:relative;margin:0 2px}
.slider b{position:absolute;left:45px;top:-7px;width:4px;height:14px;background:#666}
.pctzoom{margin-left:11px;font:12px/20px "Liberation Sans",sans-serif;color:#666}

/* taskbar */
.taskbar{height:38px;flex:none;background:#0b0b0d;display:flex;align-items:stretch;color:#fff}
.tb{width:46px;display:flex;align-items:center;justify-content:center;flex:none}
.tb.run{box-shadow:inset 0 -2px 0 #76b9ed}
.tb.active{background:#333;margin-left:-1px}
.edge{font:700 35px/30px "Liberation Sans",sans-serif;color:#0f7ad5;margin-top:-5px}
.ie-wrap{display:grid;place-items:center;width:24px;height:24px}
.ie-wrap>*{grid-area:1/1}
.ie{font:italic 700 24px/24px "Liberation Sans",sans-serif;color:#3a9be0}
.blueE{width:20px;height:20px;border-radius:50%;background:#1fa5e3;display:flex;align-items:center;justify-content:center;font:700 13px "Liberation Sans",sans-serif;color:#dff}
.mini-e{width:14px;height:16px;border-radius:50%;background:#1fa5e3;display:flex;align-items:center;justify-content:center;font:700 10px "Liberation Sans",sans-serif;color:#dff}
.xl{display:flex;align-items:center;gap:2px;background:#1e6f42;padding:2px 3px;font:700 11px "Liberation Sans",sans-serif}
.tray{margin-left:65px;display:flex;align-items:center;flex:1}
.tray>div{width:22.400px;display:flex;align-items:center;justify-content:center;flex:none}
.tray>.spk{width:18px}
.tray>.kbd{width:38px}
.tray>.ime{width:24px;margin-left:-6px;font-size:17px;color:#eee}
.tray>.clock{width:64px;font:11.500px/17px "Noto Sans CJK JP",sans-serif;letter-spacing:-.3px;text-align:center;display:block;color:#eee;white-space:nowrap}
.tray>.notify{width:20px;margin-left:10px}
```
